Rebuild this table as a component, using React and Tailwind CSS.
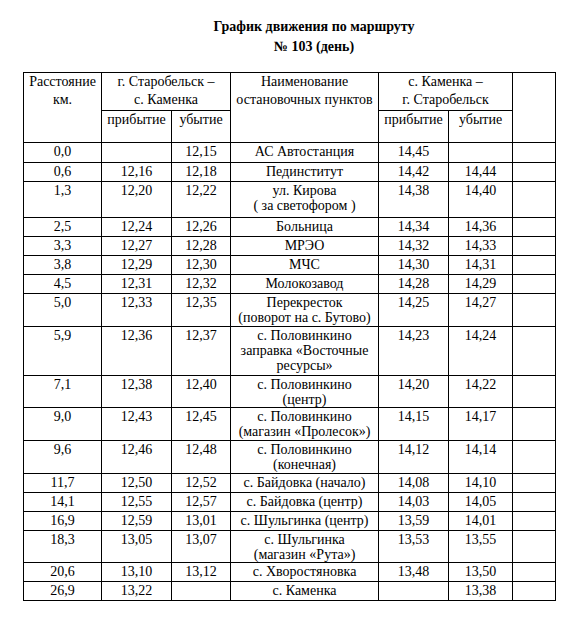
import React from 'react';

// Distance | arrival | departure | stop name | arrival | departure, row height
const rows = [
  ['0,0', '', '12,15', ['АС Автостанция'], '14,45', '', 'h-[20px]'],
  ['0,6', '12,16', '12,18', ['Пединститут'], '14,42', '14,44', 'h-[19px]'],
  ['1,3', '12,20', '12,22', ['ул. Кирова', '( за светофором )'], '14,38', '14,40', 'h-[36px]'],
  ['2,5', '12,24', '12,26', ['Больница'], '14,34', '14,36', 'h-[19px]'],
  ['3,3', '12,27', '12,28', ['МРЭО'], '14,32', '14,33', 'h-[19px]'],
  ['3,8', '12,29', '12,30', ['МЧС'], '14,30', '14,31', 'h-[19px]'],
  ['4,5', '12,31', '12,32', ['Молокозавод'], '14,28', '14,29', 'h-[19px]'],
  ['5,0', '12,33', '12,35', ['Перекресток', '(поворот на с. Бутово)'], '14,25', '14,27', 'h-[33px]'],
  ['5,9', '12,36', '12,37', ['с. Половинкино', 'заправка «Восточные', 'ресурсы»'], '14,23', '14,24', 'h-[49px]'],
  ['7,1', '12,38', '12,40', ['с. Половинкино', '(центр)'], '14,20', '14,22', 'h-[32px]'],
  ['9,0', '12,43', '12,45', ['с. Половинкино', '(магазин «Пролесок»)'], '14,15', '14,17', 'h-[33px]'],
  ['9,6', '12,46', '12,48', ['с. Половинкино', '(конечная)'], '14,12', '14,14', 'h-[33px]'],
  ['11,7', '12,50', '12,52', ['с. Байдовка (начало)'], '14,08', '14,10', 'h-[19px]'],
  ['14,1', '12,55', '12,57', ['с. Байдовка (центр)'], '14,03', '14,05', 'h-[19px]'],
  ['16,9', '12,59', '13,01', ['с. Шульгинка (центр)'], '13,59', '14,01', 'h-[19px]'],
  ['18,3', '13,05', '13,07', ['с. Шульгинка', '(магазин «Рута»)'], '13,53', '13,55', 'h-[32px]'],
  ['20,6', '13,10', '13,12', ['с. Хворостяновка'], '13,48', '13,50', 'h-[19px]'],
  ['26,9', '13,22', '', ['с. Каменка'], '', '13,38', 'h-[19px]'],
];

const cell = 'border border-black p-0 pt-[1px] align-top text-center whitespace-nowrap leading-[15px]';
const head = 'border border-black p-0 align-top text-center whitespace-nowrap leading-[18px] font-normal';

export default function App() {
  return (
    <div className="min-h-screen bg-white text-black text-[14px] leading-[16px] font-['Liberation_Serif','Times_New_Roman',serif]">
      {/* Title */}
      <div className="pt-[17px] pl-[44px] text-center font-bold leading-[20px]">
        <div>График движения по маршруту</div>
        <div>№ 103 (день)</div>
      </div>

      <div className="pl-[23px] pt-[15px]">
        <table className="table-fixed border-collapse w-[533px]">
          <colgroup>
            <col className="w-[78px]" />
            <col className="w-[70px]" />
            <col className="w-[59px]" />
            <col className="w-[148px]" />
            <col className="w-[70px]" />
            <col className="w-[64px]" />
            <col className="w-[43px]" />
          </colgroup>
          <thead>
            <tr className="h-[38px]">
              <th rowSpan={2} className={head}>
                Расстояние<br />км.
              </th>
              <th colSpan={2} className={head}>
                г. Старобельск –<br />с. Каменка
              </th>
              <th rowSpan={2} className={head}>
                Наименование<br />остановочных пунктов
              </th>
              <th colSpan={2} className={head}>
                с. Каменка –<br />г. Старобельск
              </th>
              <th rowSpan={2} className={head}></th>
            </tr>
            <tr className="h-[32px]">
              <th className={head}>прибытие</th>
              <th className={head}>убытие</th>
              <th className={head}>прибытие</th>
              <th className={head}>убытие</th>
            </tr>
          </thead>
          <tbody>
            {rows.map((r, i) => (
              <tr key={i} className={r[6]}>
                <td className={cell}>{r[0]}</td>
                <td className={cell}>{r[1]}</td>
                <td className={cell}>{r[2]}</td>
                <td className={cell}>
                  {r[3].map((line, j) => (
                    <div key={j}>{line}</div>
                  ))}
                </td>
                <td className={cell}>{r[4]}</td>
                <td className={cell}>{r[5]}</td>
                <td className={cell}></td>
              </tr>
            ))}
          </tbody>
        </table>
      </div>
    </div>
  );
}
